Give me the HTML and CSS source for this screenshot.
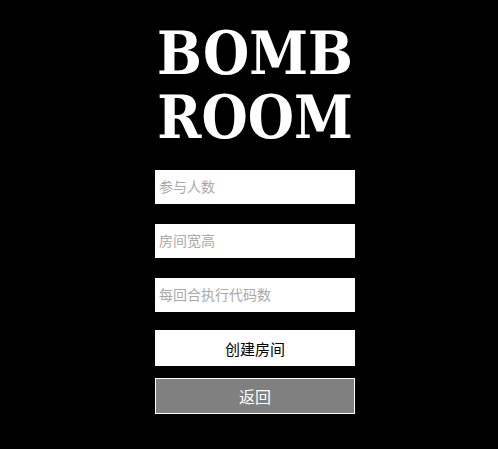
FILE: index.html
```html
<!DOCTYPE html>
<html>
<head>
<meta charset="utf-8">
<link rel="stylesheet" href="styles.css">
</head>
<body>
<div class="page">
  <h1 class="title">BOMB<br>ROOM</h1>
  <form class="form">
    <input class="field" type="text" placeholder="参与人数">
    <input class="field" type="text" placeholder="房间宽高">
    <input class="field" type="text" placeholder="每回合执行代码数">
    <button class="btn btn-create" type="button">创建房间</button>
    <button class="btn btn-back" type="button">返回</button>
  </form>
</div>
</body>
</html>
```
FILE: styles.css
```css
html, body {
  margin: 0;
  padding: 0;
  background: #000;
  height: 100%;
}
.page {
  display: flex;
  flex-direction: column;
  align-items: center;
  padding-left: 12px;
  padding-top: 22px;
}
.title {
  margin: 0;
  font-family: "DejaVu Serif Condensed", "DejaVu Serif", serif;
  font-stretch: condensed;
  font-weight: bold;
  font-size: 59px;
  line-height: 64px;
  color: #fff;
  text-align: center;
}
.form {
  display: flex;
  flex-direction: column;
  width: 200px;
  margin-top: 20px;
}
.field {
  box-sizing: border-box;
  width: 200px;
  height: 34px;
  margin: 0 0 20px 0;
  padding: 0 4px 3px;
  border: none;
  outline: none;
  background: #fff;
  font-family: "Noto Sans CJK SC", sans-serif;
  font-size: 14px;
  color: #000;
}
.field::placeholder {
  color: #a9a9a9;
}
.field:last-of-type {
  margin-bottom: 18px;
}
.btn {
  box-sizing: border-box;
  width: 200px;
  height: 36px;
  margin: 0;
  font-family: "Noto Sans CJK SC", sans-serif;
  font-size: 15px;
  cursor: pointer;
}
.btn-create {
  background: #fff;
  color: #000;
  border: none;
  margin-bottom: 12px;
}
.btn-back {
  background: #808080;
  color: #fff;
  border: 1px solid #fff;
  font-size: 16px;
}
```
